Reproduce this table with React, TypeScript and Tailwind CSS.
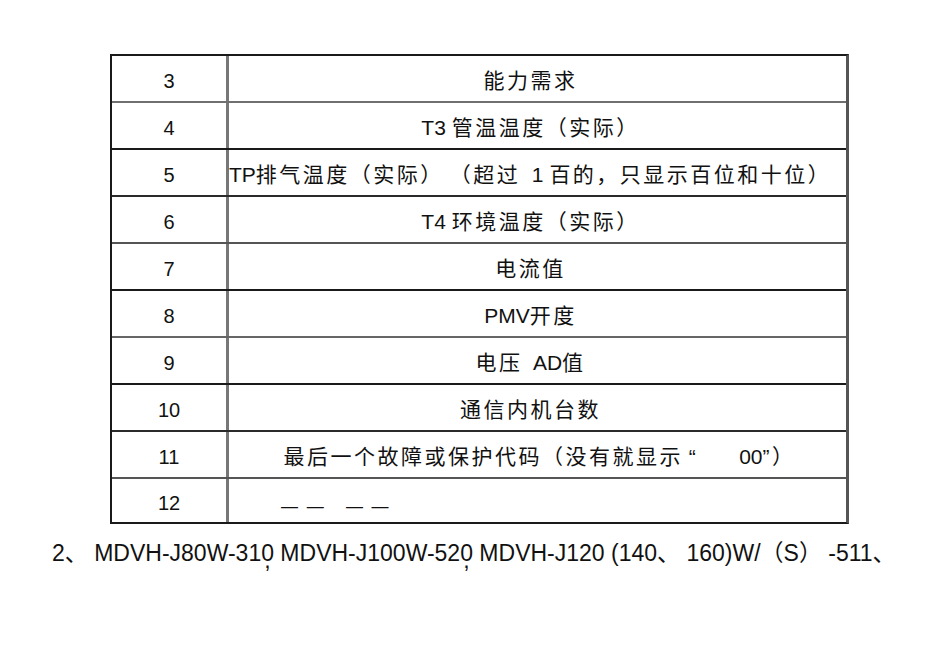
import React from "react";

// CJK runs in the source PDF sit wider than the Latin ones, so space them out
function Mixed({ text }: { text: string }) {
  const parts = text.match(/[\u3000-\u303f\u4e00-\u9fff\uff00-\uffef“”]+|[^\u3000-\u303f\u4e00-\u9fff\uff00-\uffef“”]+/g) ?? [];
  return (
    <>
      {parts.map((p, i) =>
        /[\u3000-\u303f\u4e00-\u9fff\uff00-\uffef“”]/.test(p) ? (
          <span key={i} className="tracking-[2.5px]">
            {p}
          </span>
        ) : (
          <span key={i}>{p}</span>
        )
      )}
    </>
  );
}

const rows: { n: string; text: string; line: string; align?: string }[] = [
  { n: "3", text: "能力需求", line: "" },
  { n: "4", text: "T3 管温温度（实际）", line: "border-t-[#6f6f6f]" },
  {
    n: "5",
    text: "TP排气温度（实际） （超过  1 百的，只显示百位和十位）",
    line: "border-t-[#1a1a1a]",
    align: "justify-start",
  },
  { n: "6", text: "T4 环境温度（实际）", line: "border-t-[#2a2a2a]" },
  { n: "7", text: "电流值", line: "border-t-[#555]" },
  { n: "8", text: "PMV开度", line: "border-t-[#1a1a1a]" },
  { n: "9", text: "电压  AD值", line: "border-t-[#666]" },
  { n: "10", text: "通信内机台数", line: "border-t-[#1a1a1a]" },
  {
    n: "11",
    text: "最后一个故障或保护代码（没有就显示 “       00”）",
    line: "border-t-[#2a2a2a]",
    align: "justify-center pl-[4px]",
  },
  { n: "12", text: "", line: "border-t-[#555]", align: "justify-start pl-[52px]" },
];

export default function App() {
  return (
    <div
      className="w-[950px] h-[649px] bg-white text-[#111] overflow-hidden"
      style={{ fontFamily: '"Liberation Sans", "Noto Sans CJK SC", sans-serif' }}
    >
      <div className="pt-[54px] pl-[110px]">
        <div className="w-[739px] border-2 border-[#1a1a1a] border-r-[3px] border-r-[#555]">
          {rows.map((r, i) => {
            const h = i === 0 ? "h-[45px]" : i === rows.length - 1 ? "h-[45px]" : "h-[47px]";
            return (
              <div key={r.n} className={`flex ${h} ${i === 0 ? "" : `border-t-2 ${r.line}`}`}>
                <div className="w-[117px] shrink-0 flex items-center justify-center pt-[5px] text-[20px] border-r-[3px] border-r-[#777]">
                  {r.n}
                </div>
                <div
                  className={`flex-1 flex items-center ${r.align ?? "justify-center pr-[14px]"} pt-[5px] text-[21px] whitespace-pre`}
                >
                  {r.n === "12" ? (
                    <span className="text-[17px] pt-[8px] tracking-[2px]">{"— —   — —"}</span>
                  ) : (
                    <Mixed text={r.text} />
                  )}
                </div>
              </div>
            );
          })}
        </div>
      </div>
      <div className="pl-[52px] pt-[12px] text-[23px] whitespace-pre">
        {"2、 MDVH-J80W-31"}
        <span className="relative">
          0<span className="absolute left-[3px] top-[3px]">,</span>
        </span>
        {" MDVH-J100W-52"}
        <span className="relative">
          0<span className="absolute left-[3px] top-[3px]">,</span>
        </span>
        {" MDVH-J120 (140、 160)W/（S） -511、"}
      </div>
    </div>
  );
}
